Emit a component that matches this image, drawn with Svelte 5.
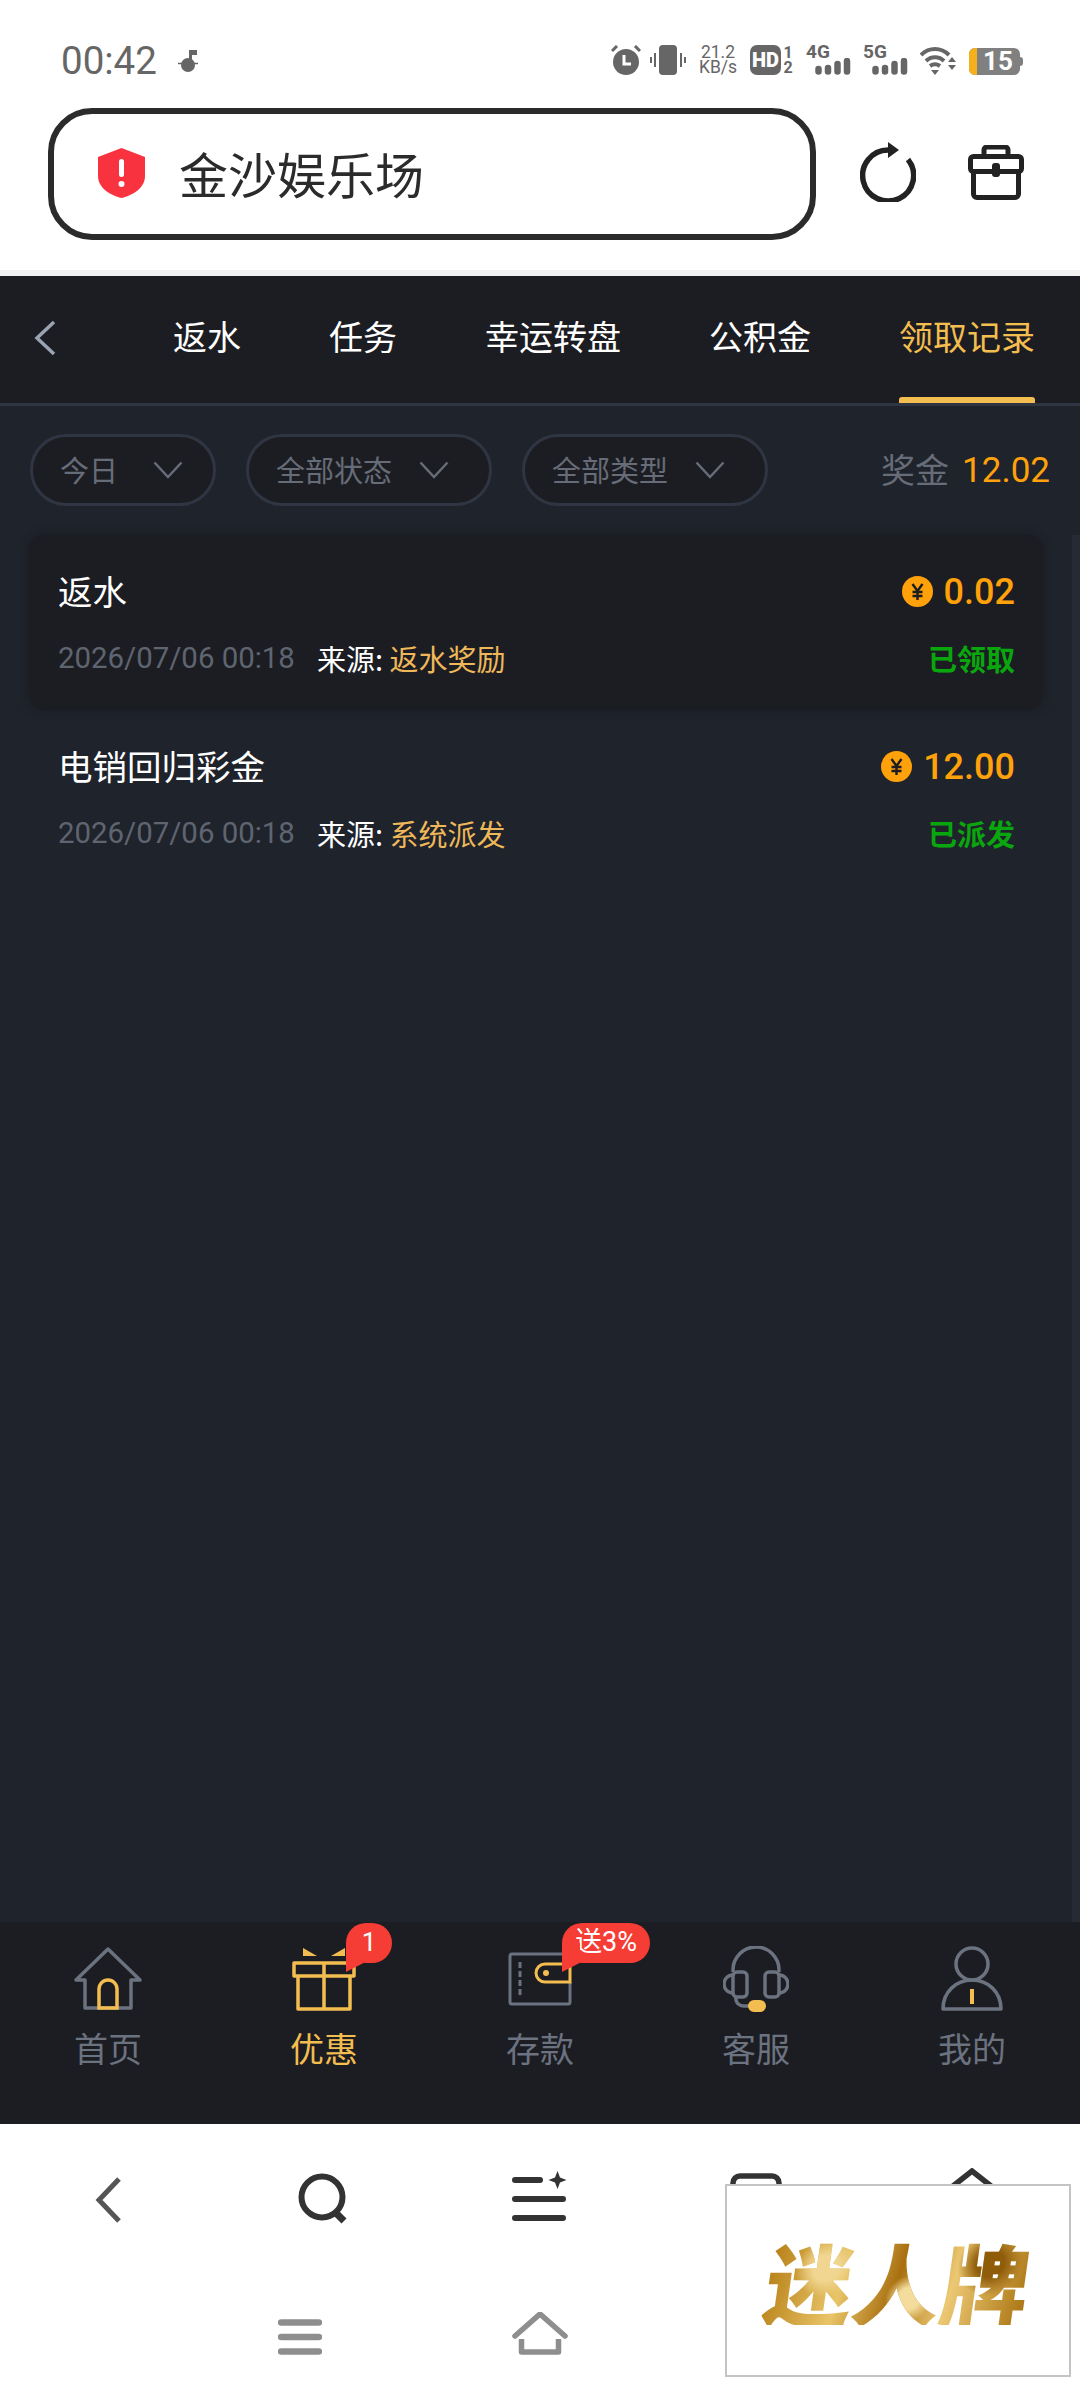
<script>
	const tabs = [
		{ name: '返水' },
		{ name: '任务' },
		{ name: '幸运转盘' },
		{ name: '公积金' },
		{ name: '领取记录', active: true }
	];
	const filters = ['今日', '全部状态', '全部类型'];
	const records = [
		{ title: '返水', amount: '0.02', date: '2026/07/06 00:18', source: '返水奖励', status: '已领取', on: true },
		{ title: '电销回归彩金', amount: '12.00', date: '2026/07/06 00:18', source: '系统派发', status: '已派发' }
	];
</script>

<div class="page">
	<div class="status">
		<span class="time">00:42</span>
		<svg class="music" width="20" height="22" viewBox="0 0 20 22">
			<circle cx="10" cy="15" r="7" fill="#666" />
			<path d="M11 0h8v5h-5v10h-3z" fill="#666" />
			<path d="M0 13.5h20" stroke="#666" stroke-width="1.5" />
		</svg>
		<div class="status-right">
			<svg width="30" height="30" viewBox="0 0 30 30">
				<circle cx="15" cy="17" r="13" fill="#666" />
				<path d="M13 10v9h7" fill="none" stroke="#fff" stroke-width="3" />
				<path d="M1 6l5-5M29 6l-5-5" stroke="#666" stroke-width="3" />
			</svg>
			<svg class="vib" width="36" height="30" viewBox="0 0 36 30">
				<rect x="9" y="0" width="18" height="30" rx="4" fill="#666" />
				<path d="M5 8v14M1 12v6M31 8v14M35 12v6" stroke="#666" stroke-width="2" />
			</svg>
			<div class="speed"><span>21.2</span><span>KB/s</span></div>
			<div class="hd"><b>HD</b></div>
			<div class="sim"><span>1</span><span>2</span></div>
			<div class="net">
				<span>4G</span>
				<svg width="36" height="17" viewBox="0 0 36 17"><path d="M3.5 11v2.5M13 10v3.5M22.5 6v7.5M32 3v10.5" stroke="#666" stroke-width="6.5" stroke-linecap="round" /></svg>
			</div>
			<div class="net five">
				<span>5G</span>
				<svg width="36" height="17" viewBox="0 0 36 17"><path d="M3.5 11v2.5M13 10v3.5M22.5 6v7.5M32 3v10.5" stroke="#666" stroke-width="6.5" stroke-linecap="round" /></svg>
			</div>
			<svg class="wifi" width="36" height="29" viewBox="0 0 36 29">
				<path d="M1 9c8-8 20-8 28 0M6 15c5-5 13-5 18 0M10 20c3-2 7-2 10 0" fill="none" stroke="#666" stroke-width="4" />
				<path d="M11 24h8l-4 5z M28 16l4-5 4 5z M28 19h8l-4 5z" fill="#666" />
			</svg>
			<div class="battery"><i></i><span>15</span></div>
		</div>
	</div>

	<div class="address">
		<div class="url">
			<svg width="47" height="50" viewBox="0 0 47 50">
				<path d="M23.5 0 L47 9 V28 C47 40 35 47 23.5 50 C12 47 0 40 0 28 V9 Z" fill="#f8323f" />
				<rect x="21" y="11" width="5" height="18" rx="2.5" fill="#fff" />
				<circle cx="23.5" cy="36" r="3" fill="#fff" />
			</svg>
			<span>金沙娱乐场</span>
		</div>
		<svg class="refresh" width="56" height="60" viewBox="0 0 56 60">
			<path d="M28 8 A25.5 25.5 0 1 0 48 17.5" fill="none" stroke="#222" stroke-width="5.5" />
			<path d="M28 0 L39 8 L28 16 Z" fill="#222" />
		</svg>
		<svg class="box" width="56" height="56" viewBox="0 0 56 56">
			<path d="M16 10V5a3 3 0 0 1 3-3h18a3 3 0 0 1 3 3v5" fill="none" stroke="#222" stroke-width="5" />
			<rect x="2.5" y="11.5" width="51" height="15" rx="3" fill="none" stroke="#222" stroke-width="5" />
			<path d="M5.5 27V49a3.5 3.5 0 0 0 3.5 3.5H47a3.5 3.5 0 0 0 3.5-3.5V27" fill="none" stroke="#222" stroke-width="5" />
			<rect x="24" y="18" width="8" height="14" rx="3" fill="#222" />
		</svg>
	</div>

	<div class="shell">
		<div class="tabs">
			<svg class="back" width="24" height="36" viewBox="0 0 24 36"><path d="M21 2 L4 18 L21 34" fill="none" stroke="#9aa3b2" stroke-width="3.5" /></svg>
			{#each tabs as t}
				<div class="tab" class:active={t.active}>{t.name}</div>
			{/each}
		</div>

		<div class="filters">
			{#each filters as f, i}
				<div class="pill" class:first={i === 0}>
					<span>{f}</span>
					<svg width="30" height="18" viewBox="0 0 30 18"><path d="M1.5 1.5 L15 16 L28.5 1.5" fill="none" stroke="#666c78" stroke-width="2.5" /></svg>
				</div>
			{/each}
			<div class="bonus"><span>奖金</span><b>12.02</b></div>
		</div>

		<div class="list">
			{#each records as r}
				<div class="card" class:on={r.on}>
					<div class="row">
						<span class="title">{r.title}</span>
						<span class="amount">
							<svg width="31" height="31" viewBox="0 0 31 31">
								<circle cx="15.5" cy="15.5" r="15.5" fill="#ffa10a" />
								<path d="M10.5 8 L15.5 15 L20.5 8 M15.5 15 V24 M10.5 16 H20.5 M10.5 20 H20.5" fill="none" stroke="#1c1d22" stroke-width="2.4" />
							</svg>
							{r.amount}
						</span>
					</div>
					<div class="row second">
						<span class="date">{r.date}</span>
						<span class="source">来源: <em>{r.source}</em></span>
						<span class="state">{r.status}</span>
					</div>
				</div>
			{/each}
			<div class="scroll"></div>
		</div>

		<div class="nav">
			<div class="item">
				<svg width="70" height="64" viewBox="0 0 70 64">
					<path d="M3 33 L35 2 L67 33 H58 V61 H12 V33 Z" fill="none" stroke="#6b7280" stroke-width="3.5" stroke-linejoin="round" />
					<path d="M26 61 V42 a9 9 0 0 1 18 0 V61 Z" fill="none" stroke="#f4bd50" stroke-width="3.5" />
				</svg>
				<span>首页</span>
			</div>
			<div class="item active">
				<div class="badge">1</div>
				<svg width="64" height="64" viewBox="0 0 64 64">
					<path d="M2 16 H62 V29 H2 Z M6 29 V62 H58 V29 M32 16 V62" fill="none" stroke="#f4bd50" stroke-width="3.5" stroke-linejoin="round" />
					<path d="M11 1 L25 9 L11 9 Z M53 1 L39 9 L53 9 Z" fill="#f4bd50" />
				</svg>
				<span>优惠</span>
			</div>
			<div class="item">
				<div class="badge wide">送3%</div>
				<svg width="64" height="54" viewBox="0 0 64 54">
					<path d="M62 12 V4 a2 2 0 0 0-2-2 H4 a2 2 0 0 0-2 2 V50 a2 2 0 0 0 2 2 H60 a2 2 0 0 0 2-2 V30" fill="none" stroke="#6b7280" stroke-width="3" />
					<path d="M12 10 V44" stroke="#6b7280" stroke-width="3" stroke-dasharray="6 3" />
					<path d="M62 12 H37 a9 9 0 0 0 0 18 H62 Z" fill="none" stroke="#f4bd50" stroke-width="3" />
					<circle cx="38" cy="21" r="3" fill="#f4bd50" />
				</svg>
				<span>存款</span>
			</div>
			<div class="item">
				<svg width="66" height="66" viewBox="0 0 66 66">
					<path d="M10 26 V24 a23 23 0 0 1 46 0 V26" fill="none" stroke="#6b7280" stroke-width="3.5" />
					<rect x="10" y="26" width="14" height="25" rx="4" fill="none" stroke="#6b7280" stroke-width="3.5" />
					<rect x="42" y="26" width="14" height="25" rx="4" fill="none" stroke="#6b7280" stroke-width="3.5" />
					<path d="M10 29 a9 9 0 0 0 0 18 M56 29 a9 9 0 0 1 0 18" fill="none" stroke="#6b7280" stroke-width="3.5" />
					<path d="M13 51 V54 a8 8 0 0 0 8 6 H26" fill="none" stroke="#6b7280" stroke-width="3.5" />
					<rect x="25" y="54" width="18" height="12" rx="6" fill="#f4bd50" />
				</svg>
				<span>客服</span>
			</div>
			<div class="item">
				<svg width="62" height="66" viewBox="0 0 62 66">
					<circle cx="31" cy="18" r="16" fill="none" stroke="#6b7280" stroke-width="3.5" />
					<path d="M2 63 C2 46 15 34 31 34 C47 34 60 46 60 63 Z" fill="none" stroke="#6b7280" stroke-width="3.5" stroke-linejoin="round" />
					<path d="M31 43 V58" stroke="#f4bd50" stroke-width="4" />
				</svg>
				<span>我的</span>
			</div>
		</div>
	</div>

	<div class="tools">
		<svg width="27" height="52" viewBox="0 0 27 52"><path d="M24 8 L4 29 L24 50" fill="none" stroke="#555" stroke-width="5" /></svg>
		<svg width="52" height="54" viewBox="0 0 52 54">
			<circle cx="24" cy="26" r="20.5" fill="none" stroke="#333" stroke-width="6" />
			<path d="M36 40 L46 50" stroke="#333" stroke-width="7" />
		</svg>
		<svg width="56" height="52" viewBox="0 0 56 52">
			<path d="M3 9 H28 M3 28 H51 M3 47 H51" stroke="#333" stroke-width="6" stroke-linecap="round" />
			<path d="M45.5 0 L48 6.5 L54.5 9 L48 11.5 L45.5 18 L43 11.5 L36.5 9 L43 6.5 Z" fill="#333" />
		</svg>
		<svg width="52" height="52" viewBox="0 0 52 52"><rect x="3" y="5" width="46" height="44" rx="7" fill="none" stroke="#333" stroke-width="5.5" /></svg>
		<svg class="home" width="52" height="52" viewBox="0 0 52 52"><path d="M2 22 L26 3 L50 22 M8 22 V47 H44 V22" fill="none" stroke="#333" stroke-width="5.5" /></svg>
	</div>

	<div class="sysnav">
		<svg width="44" height="36" viewBox="0 0 44 36"><path d="M3 3.5 H41 M3 18 H41 M3 32.5 H41" stroke="#8e8e8e" stroke-width="6.5" stroke-linecap="round" /></svg>
		<svg width="56" height="43" viewBox="0 0 56 43">
			<path d="M3 24 L28 2 L53 24" fill="none" stroke="#8e8e8e" stroke-width="5.5" stroke-linecap="round" />
			<path d="M9.5 27 V40 H46.5 V27" fill="none" stroke="#8e8e8e" stroke-width="5.5" stroke-linejoin="round" />
		</svg>
		<div></div>
	</div>

	<div class="stamp"><span>迷人牌</span></div>
</div>

<style>
	:global(body) {
		margin: 0;
	}

	.page {
		position: relative;
		width: 1080px;
		height: 2400px;
		display: flex;
		flex-direction: column;
		background: #fff;
		font-family: 'Noto Sans CJK SC', sans-serif;
		overflow: hidden;
	}

	.status {
		height: 108px;
		flex-shrink: 0;
		padding: 45px 60px 0 61px;
		box-sizing: border-box;
		display: flex;
		align-items: flex-start;
		color: #666;
	}

	.time {
		font: 38.5px/32px Roboto, sans-serif;
	}

	.music {
		margin: 5px 0 0 21px;
	}

	.status-right {
		margin-left: auto;
		display: flex;
		align-items: flex-start;
		height: 30px;
	}

	.vib {
		margin-left: 9px;
	}

	.speed {
		margin-left: 14px;
		width: 36px;
		display: flex;
		flex-direction: column;
		align-items: center;
		font: 17.5px/15px Roboto, sans-serif;
	}

	.hd {
		margin-left: 14px;
		width: 31px;
		height: 30px;
		background: #666;
		border-radius: 7px;
		color: #fff;
		display: flex;
		align-items: center;
		justify-content: center;
	}

	.hd b {
		font: 900 20px/30px Roboto, sans-serif;
	}

	.sim {
		width: 12px;
		margin-left: 1px;
		display: flex;
		flex-direction: column;
		align-items: center;
		font: 700 16px/15px Roboto, sans-serif;
	}

	.net {
		margin-left: 12px;
		width: 44px;
		height: 30px;
		display: flex;
		flex-direction: column;
		font: 700 19px/14px Roboto, sans-serif;
	}

	.net.five {
		margin-left: 13px;
	}

	.net svg {
		margin: -1px 0 0 9px;
	}

	.wifi {
		margin: 1px 0 0 13px;
	}

	.battery {
		position: relative;
		margin: 3px 0 0 13px;
		width: 51px;
		height: 27px;
		background: #808080;
		border-radius: 6px;
		color: #fff;
		font: 700 26px/27px Roboto, sans-serif;
		text-align: center;
		padding-left: 7px;
		box-sizing: border-box;
	}

	.battery i {
		position: absolute;
		left: 0;
		top: 0;
		bottom: 0;
		width: 8px;
		border-radius: 6px 0 0 6px;
		background: #f5b11c;
	}

	.battery::after {
		content: '';
		position: absolute;
		right: -3px;
		top: 9px;
		width: 3px;
		height: 9px;
		border-radius: 0 3px 3px 0;
		background: #808080;
	}

	.address {
		height: 168px;
		flex-shrink: 0;
		display: flex;
		align-items: flex-start;
		padding-left: 48px;
		box-sizing: border-box;
		border-bottom: 6px solid #f1f1f1;
	}

	.url {
		width: 768px;
		height: 132px;
		box-sizing: border-box;
		border: 6px solid #2b2b2b;
		border-radius: 44px;
		display: flex;
		align-items: center;
		gap: 34px;
		padding: 0 0 3px 44px;
		font-size: 49px;
		color: #2b2b2b;
	}

	.refresh {
		margin: 34px 0 0 44px;
	}

	.box {
		margin: 37px 0 0 52px;
	}

	.shell {
		height: 1848px;
		flex-shrink: 0;
		display: flex;
		flex-direction: column;
		background: #1f232c;
	}

	.tabs {
		height: 130px;
		flex-shrink: 0;
		box-sizing: border-box;
		background: #1c1d22;
		border-bottom: 3px solid #2f3542;
		display: flex;
		gap: 88px;
		padding-left: 173px;
		position: relative;
	}

	.back {
		position: absolute;
		left: 33px;
		top: 44px;
	}

	.tab {
		position: relative;
		height: 127px;
		font-size: 34px;
		line-height: 120px;
		color: #fff;
	}

	.tab.active {
		color: #f4bd50;
	}

	.tab.active::after {
		content: '';
		position: absolute;
		left: 0;
		right: 0;
		bottom: 0;
		height: 6px;
		border-radius: 3px 3px 0 0;
		background: #f4bd50;
	}

	.filters {
		display: flex;
		align-items: center;
		gap: 30px;
		padding: 28px 30px 29px;
		flex-shrink: 0;
	}

	.pill {
		height: 72px;
		box-sizing: border-box;
		border: 3px solid #2f3542;
		border-radius: 36px;
		background: #1c1d22;
		padding: 0 40px 3px 27px;
		display: flex;
		align-items: center;
		gap: 27px;
		font-size: 29px;
		color: #666c78;
	}

	.pill.first {
		padding-right: 30px;
		gap: 35px;
	}

	.pill svg {
		margin-top: 3px;
	}

	.bonus {
		margin-left: auto;
		display: flex;
		align-items: center;
		gap: 13px;
		font-size: 34px;
		color: #666c78;
	}

	.bonus span {
		margin-top: -4px;
	}

	.bonus b {
		font: 400 35px Roboto, sans-serif;
		color: #ffa10a;
	}

	.list {
		position: relative;
		flex: 1;
		padding: 0 37px 0 29px;
	}

	.scroll {
		position: absolute;
		right: 0;
		top: 0;
		bottom: 0;
		width: 8px;
		background: #252a34;
	}

	.card {
		height: 175px;
		box-sizing: border-box;
		padding: 36px 28px 0 29px;
		border-radius: 16px;
	}

	.card.on {
		background: #1c1d22;
		box-shadow: 0 0 8px rgba(20, 20, 24, 0.5);
	}

	.row {
		display: flex;
		align-items: center;
		height: 38px;
		justify-content: space-between;
	}

	.row.second {
		margin-top: 30px;
		justify-content: flex-start;
	}

	.title {
		font-size: 34.5px;
		color: #fff;
		margin-top: -1px;
	}

	.amount {
		display: flex;
		align-items: center;
		gap: 11px;
		margin-top: 3px;
		font: 500 36px Roboto, sans-serif;
		color: #ffa10a;
	}

	.date {
		font: 29.4px Roboto, sans-serif;
		color: #5f6570;
	}

	.source {
		margin-left: 22px;
		font-size: 29px;
		color: #fff;
	}

	.source em {
		font-style: normal;
		color: #eeb85a;
	}

	.state {
		margin-left: auto;
		font-size: 29px;
		font-weight: 700;
		color: #0aa60e;
	}

	.nav {
		height: 202px;
		flex-shrink: 0;
		background: #1c1d22;
		display: grid;
		grid-template-columns: repeat(5, 216px);
	}

	.item {
		position: relative;
		display: flex;
		flex-direction: column;
		align-items: center;
		font-size: 34px;
		color: #6b7280;
	}

	.item svg {
		position: relative;
		margin-top: 24px;
		height: 66px;
	}

	.item span {
		line-height: 40px;
		margin-top: 16px;
	}

	.item.active {
		color: #f4bd50;
	}

	.badge {
		position: absolute;
		z-index: 1;
		left: 130px;
		top: 1px;
		width: 46px;
		height: 40px;
		border-radius: 20px;
		background: #f63d35;
		color: #fff;
		font: 26px/38px Roboto, sans-serif;
		text-align: center;
	}

	.badge::after {
		content: '';
		position: absolute;
		left: 0;
		top: 20px;
		width: 18px;
		height: 29px;
		background: #f63d35;
		clip-path: polygon(0 0, 100% 0, 100% 68%, 0 100%);
	}

	.badge.wide {
		width: 88px;
		font: 27px/38px Roboto, 'Noto Sans CJK SC', sans-serif;
	}

	.tools {
		height: 150px;
		flex-shrink: 0;
		box-sizing: border-box;
		padding-top: 47px;
		display: grid;
		grid-template-columns: repeat(5, 216px);
		justify-items: center;
		align-items: start;
	}

	.home {
		margin-top: -3px;
	}

	.sysnav {
		display: grid;
		grid-template-columns: repeat(3, 240px);
		justify-items: center;
		align-items: end;
		padding: 0 180px;
		height: 81px;
	}

	.stamp {
		position: absolute;
		left: 725px;
		top: 2184px;
		width: 346px;
		height: 193px;
		box-sizing: border-box;
		border: 2px solid #c4c4c4;
		background: #fff;
		display: flex;
		align-items: center;
		justify-content: center;
	}

	.stamp span {
		font-size: 88px;
		font-weight: 900;
		line-height: 1;
		transform: skewX(-8deg);
		background:
			radial-gradient(circle at 22% 35%, #f0d690 0 6%, transparent 14%),
			radial-gradient(circle at 55% 70%, #f3dc9c 0 7%, transparent 15%),
			radial-gradient(circle at 84% 30%, #8f5c0a 0 6%, transparent 14%),
			linear-gradient(100deg, #b47c12, #e9c468 30%, #a86f10 50%, #ecc873 70%, #a8720f);
		-webkit-background-clip: text;
		background-clip: text;
		color: transparent;
	}
</style>
